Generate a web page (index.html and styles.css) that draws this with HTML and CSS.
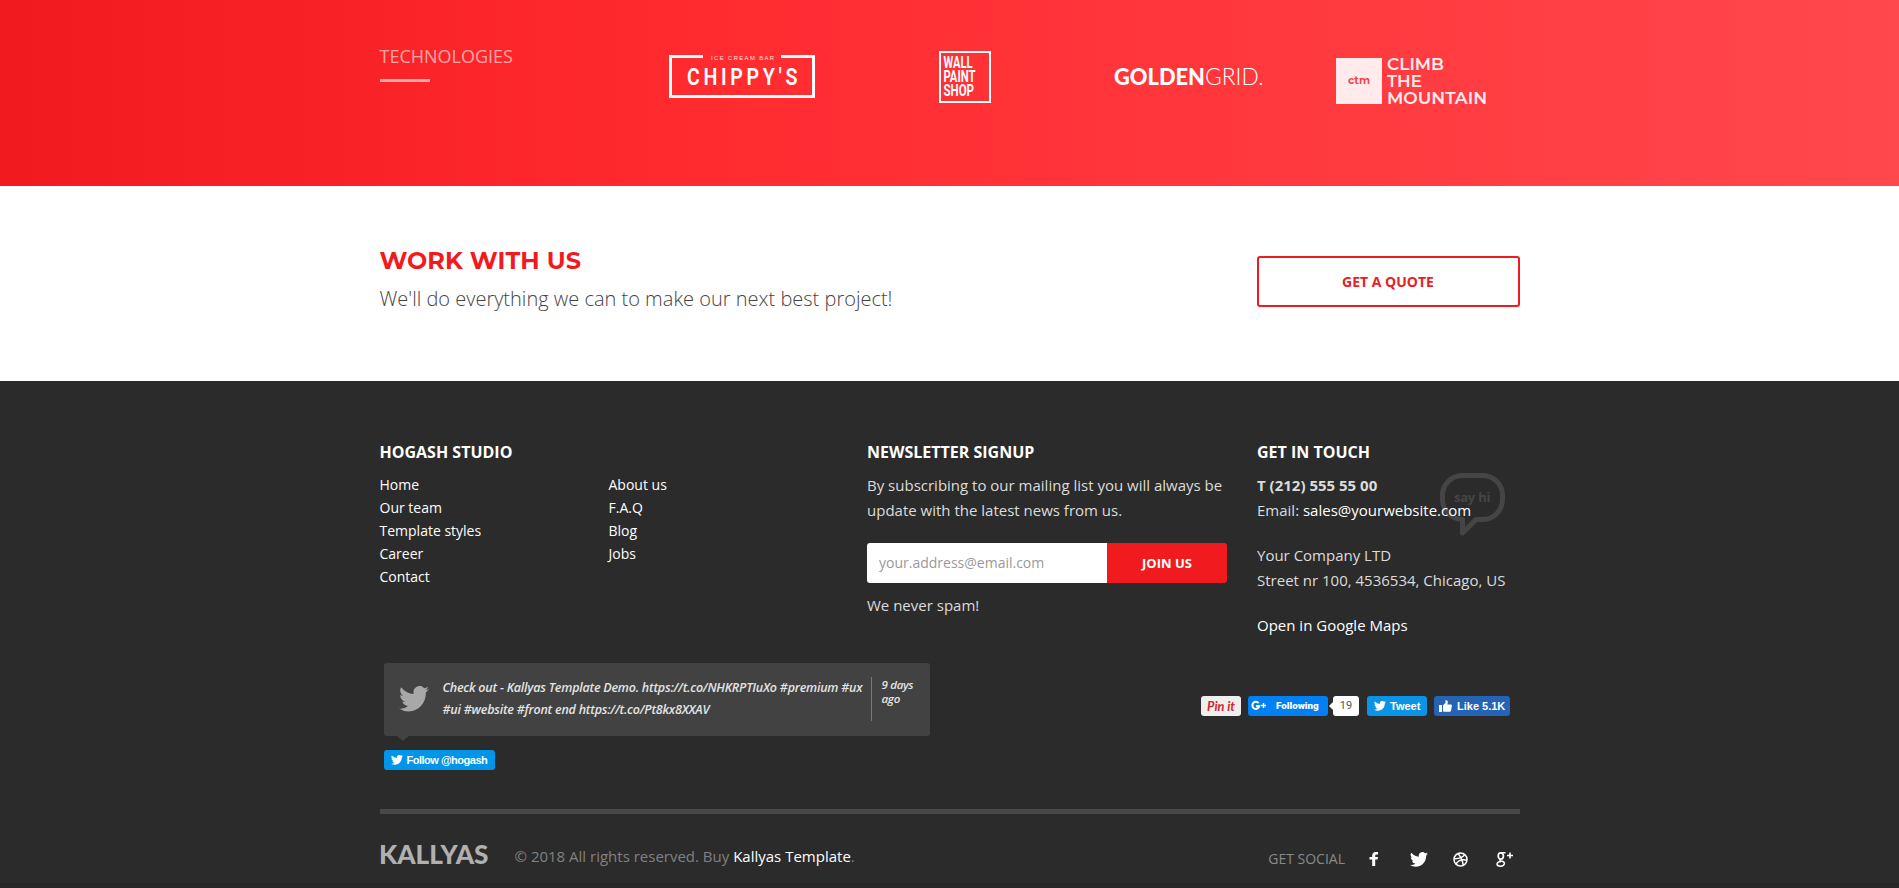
FILE: index.html
```html
<!DOCTYPE html>
<html lang="en">
<head>
<meta charset="utf-8">
<title>Kallyas</title>
<link rel="stylesheet" href="styles.css">
</head>
<body>
<svg width="0" height="0" class="defs" aria-hidden="true">
  <symbol id="bird" viewBox="0 0 24 20" preserveAspectRatio="none"><path d="M24 2.4a9.8 9.8 0 0 1-2.8.8A4.9 4.9 0 0 0 23.3.5a9.9 9.9 0 0 1-3.1 1.2 4.9 4.9 0 0 0-8.4 4.5A14 14 0 0 1 1.7 1a4.9 4.9 0 0 0 1.5 6.6 4.9 4.9 0 0 1-2.2-.6v.1c0 2.4 1.7 4.4 4 4.8a5 5 0 0 1-2.3.1 4.9 4.9 0 0 0 4.6 3.4A9.9 9.9 0 0 1 0 17.4a14 14 0 0 0 7.5 2.2c9.1 0 14-7.5 14-14v-.6A10 10 0 0 0 24 2.4z"/></symbol>
</svg>

<section class="tech">
  <div class="wrap tech-row">
    <div class="tech-title"><h3>TECHNOLOGIES</h3><span class="rule"></span></div>
    <svg class="logo chippy" width="147" height="43" viewBox="0 0 147 43">
      <path d="M34 1.5H1.5V41.5H144.500V1.500H112" fill="none" stroke="#fff" stroke-width="3"/>
      <text x="42" y="4.500" font-size="5.800" class="arial" textLength="63">ICE CREAM BAR</text>
      <text transform="translate(18 30.200) scale(.8 1)" font-size="24.500" class="roboto" textLength="138">CHIPPY'S</text>
    </svg>
    <svg class="logo wall" width="53" height="52" viewBox="0 0 53 52">
      <rect x="1" y="1" width="50" height="50" fill="none" stroke="#fff" stroke-width="2"/>
      <g font-size="16.500" class="cond">
        <text x="4.500" y="17" textLength="29" lengthAdjust="spacingAndGlyphs">WALL</text>
        <text x="4.500" y="31" textLength="32" lengthAdjust="spacingAndGlyphs">PAINT</text>
        <text x="4.500" y="44.700" textLength="30.500" lengthAdjust="spacingAndGlyphs">SHOP</text>
      </g>
    </svg>
    <svg class="logo golden" width="151" height="24" viewBox="0 0 151 24">
      <text x="0" y="19.300" font-size="22.500" class="lato-h" textLength="91" lengthAdjust="spacingAndGlyphs">GOLDEN</text>
      <text x="91" y="19.300" font-size="22.500" class="lato-l" textLength="58.500" lengthAdjust="spacingAndGlyphs">GRID.</text>
    </svg>
    <svg class="logo climb" width="152" height="50" viewBox="0 0 152 50">
      <rect x="0" y="2" width="46" height="46" fill="#ffebec"/>
      <text x="12" y="28" font-size="11" class="ctm" textLength="22" lengthAdjust="spacingAndGlyphs">ctm</text>
      <g font-size="17" class="mont" fill="#ffebec">
        <text x="51" y="14" textLength="57" lengthAdjust="spacingAndGlyphs">CLIMB</text>
        <text x="51" y="31" textLength="35" lengthAdjust="spacingAndGlyphs">THE</text>
        <text x="51" y="47.500" textLength="100" lengthAdjust="spacingAndGlyphs">MOUNTAIN</text>
      </g>
    </svg>
  </div>
</section>

<section class="cta">
  <div class="wrap cta-row">
    <div>
      <h2>WORK WITH US</h2>
      <p class="lead">We'll do everything we can to make our next best project!</p>
    </div>
    <a class="quote">GET A QUOTE</a>
  </div>
</section>

<footer class="footer">
  <div class="wrap cols">
    <div class="col-menu">
      <h4>HOGASH STUDIO</h4>
      <ul class="menu">
        <li>Home</li><li>Our team</li><li>Template styles</li><li>Career</li><li>Contact</li>
        <li>About us</li><li>F.A.Q</li><li>Blog</li><li>Jobs</li>
      </ul>
    </div>
    <div class="col-news">
      <h4 class="h-news">NEWSLETTER SIGNUP</h4>
      <p>By subscribing to our mailing list you will always be<br>update with the latest news from us.</p>
      <div class="form"><span class="field">your.address@email.com</span><span class="join">JOIN US</span></div>
      <p>We never spam!</p>
    </div>
    <div class="col-touch">
      <svg class="bubble" width="66" height="64" viewBox="0 0 66 64">
        <path d="M22 2.500H43A20 20 0 0 1 62.500 22V27A20 20 0 0 1 43 46.500H36L22.500 60V46.500A20 20 0 0 1 2.500 27V22A20 20 0 0 1 22 2.500Z" fill="none" stroke="#454545" stroke-width="5" stroke-linejoin="round"/>
        <text x="14" y="28.500" font-size="13" class="sayhi" textLength="36.500">say hi</text>
      </svg>
      <h4>GET IN TOUCH</h4>
      <p><b>T (212) 555 55 00</b><br>Email: <a>sales@yourwebsite.com</a></p>
      <p>Your Company LTD<br>Street nr 100, 4536534, Chicago, US</p>
      <p><a>Open in Google Maps</a></p>
    </div>
  </div>

  <div class="wrap feed">
    <div>
      <div class="tweet">
        <svg class="tw-icon" width="30" height="26" fill="#a8a8a8"><use href="#bird" width="30" height="26"/></svg>
        <div class="tw-text">Check out - Kallyas Template Demo. https://t.co/NHKRPTIuXo #premium #ux<br>#ui #website #front end https://t.co/Pt8kx8XXAV</div>
        <div class="tw-date">9 days<br>ago</div>
      </div>
      <div class="follow"><svg width="12" height="10" fill="#fff"><use href="#bird" width="12" height="10"/></svg><span>Follow @hogash</span></div>
    </div>
    <div class="share">
      <span class="pin"><svg width="40" height="20"><text x="6" y="14.500" class="pint" textLength="28" lengthAdjust="spacingAndGlyphs">Pin it</text></svg></span>
      <span class="gp"><svg width="16" height="12" viewBox="0 0 16 12" fill="none" stroke="#fff" stroke-width="2"><path d="M7.600 3.200A3.500 3.500 0 1 0 8.300 6H5"/><path d="M10 5.500h5M12.500 3v5" stroke-width="1.400"/></svg><span>Following</span></span>
      <span class="count">19</span>
      <span class="tw"><svg width="12" height="10" fill="#fff"><use href="#bird" width="12" height="10"/></svg><span>Tweet</span></span>
      <span class="like"><svg width="13" height="12" viewBox="0 0 13 12" fill="#fff"><path d="M0 5h3v7H0zM4 5.200L6.400 3V0.600Q8.800-.4 8.800 2.200L8.400 4.500H12q1 .2 .9 1.300l-.9 5q-.3 1-1.300 1H5L4 11.200z"/></svg><span>Like 5.1K</span></span>
    </div>
  </div>

  <div class="wrap bottom">
    <svg class="kallyas" width="110" height="26"><text x="-1" y="21" font-size="26.500" textLength="109.500" lengthAdjust="spacingAndGlyphs">KALLYAS</text></svg>
    <p class="copy">© 2018 All rights reserved. Buy <a>Kallyas Template</a>.</p>
    <div class="social">
      <span class="get">GET SOCIAL</span>
      <svg width="10" height="14" viewBox="0 0 10 14"><path d="M9 0H6.800Q3.200 0 3.200 3.600V5H.5v2.600H3.200V14H6.200V7.600H8.600L9 5H6.200V3.700Q6.200 2.500 7.300 2.500H9z" fill="#fff"/></svg>
      <svg width="18" height="15" fill="#fff"><use href="#bird" width="18" height="15"/></svg>
      <svg width="15" height="15" viewBox="0 0 15 15" fill="none" stroke="#fff" stroke-width="1.500"><circle cx="7.500" cy="7.500" r="6.500"/><path d="M5 1.500Q9 6 10.300 13M1 6.600Q8.500 7 11.600 2.600M3 12.200Q6 6.500 14 8.200"/></svg>
      <svg width="18" height="15" viewBox="0 0 18 15" fill="none" stroke="#fff"><ellipse cx="4.800" cy="4" rx="2.600" ry="3.200" stroke-width="1.700"/><path d="M5 .7H9.500M4.300 7.200Q3 8.300 5.200 9Q8.600 9.800 8.400 11.700Q8 14.200 4.600 14.200Q1 14.200 1 12Q1.200 9.800 5 9.500" stroke-width="1.500"/><path d="M11 3.500h6M14 .5v6" stroke-width="1.600"/></svg>
    </div>
  </div>
</footer>
</body>
</html>
```
FILE: styles.css
```css
* { box-sizing: border-box; }
body { margin: 0; height: 888px; overflow: hidden; font-family: "Open Sans", sans-serif; background: #2b2b2b; }
h2, h3, h4, p, ul { margin: 0; padding: 0; font-weight: 400; }
svg { display: block; flex: none; overflow: visible; }
.defs { position: absolute; }
.wrap { width: 1140px; margin: 0 auto; }

.tech { height: 186px; background: linear-gradient(90deg, #f11a1f 0%, #ff2a2e 35%, #ff484d 100%); }
.tech-row { display: flex; align-items: flex-start; padding-top: 44px; }
.tech-title { width: 289.500px; }
.tech-title h3 { font-size: 18px; line-height: 25px; color: rgba(255,255,255,.6); }
.rule { display: block; width: 50px; height: 3px; margin-top: 10px; background: rgba(255,255,255,.6); }
.logo { fill: #fff; }
.chippy { margin: 11px 123px 0 0; }
.wall { margin: 7px 122px 0 0; }
.golden { margin: 22px 71px 0 0; }
.climb { margin-top: 12px; }
.arial { font-family: "Liberation Sans", sans-serif; opacity: .85; }
.roboto { font-family: Roboto, sans-serif; font-weight: 600; }
.cond { font-family: Roboto, sans-serif; font-weight: 700; }
.lato-h { font-family: Lato, sans-serif; font-weight: 900; }
.lato-l { font-family: Lato, sans-serif; font-weight: 300; }
.mont { font-family: Montserrat, Inter, sans-serif; font-weight: 600; }
.ctm { font-family: Montserrat, Inter, sans-serif; font-weight: 700; fill: #f5454a; }

.cta { height: 195px; background: #fff; }
.cta-row { display: flex; justify-content: space-between; align-items: flex-start; padding-top: 60px; }
h2 { font: 700 24px/29px Montserrat, Inter, sans-serif; color: #f11b1f; letter-spacing: .1px; }
.lead { font-size: 20px; font-weight: 300; line-height: 30px; margin-top: 9px; color: #444; }
.quote { width: 263px; height: 51px; margin-top: 10px; border: 2px solid #f11b1f; border-radius: 3px; font-size: 14px; font-weight: 700; line-height: 47px; text-align: center; color: #e8201f; }

.footer { height: 507px; padding-top: 61px; color: #dcdcdc; border-bottom: 5px solid #272727; background: #2b2b2b; }
.footer a { color: #fff; }
h4 { font-size: 16px; font-weight: 700; line-height: 20px; margin-bottom: 11px; color: #fff; }
.cols { display: flex; height: 221px; }
.cols p { font-size: 15px; line-height: 25px; margin-bottom: 20px; white-space: nowrap; }
.col-menu { width: 487.500px; }
.col-news { width: 390px; }
.menu { list-style: none; height: 115px; display: grid; grid-template-rows: repeat(5, 23px); grid-auto-flow: column; grid-auto-columns: 229px; font-size: 14px; line-height: 23px; color: #fff; }
.form { display: flex; width: 360px; height: 40px; margin-bottom: 10px; border-radius: 3px; overflow: hidden; }
.field { width: 240px; padding-left: 12px; background: #fff; color: #999; font-size: 14px; line-height: 39px; }
.join { width: 120px; background: #f11b1f; color: #fff; font-size: 13px; font-weight: 700; line-height: 41px; text-align: center; }
.col-touch { position: relative; }
.bubble { position: absolute; left: 183px; top: 31px; }
.col-touch p { position: relative; }
.sayhi { font-weight: 700; fill: #454545; }

.feed { display: flex; justify-content: space-between; height: 146px; padding-left: 4px; }
.tweet { position: relative; display: flex; width: 546px; height: 73px; border-radius: 3px; background: #424242; color: #e4e4e4; font-style: italic; font-weight: 600; white-space: nowrap; }
.tweet::after { content: ""; position: absolute; left: 13px; top: 73px; border: 6px solid transparent; border-top: 5px solid #424242; border-bottom: 0; }
.tw-icon { margin: 23px 14px 0 15px; }
.tw-text { width: 428px; font-size: 12.500px; line-height: 22px; padding-top: 14px; letter-spacing: -.22px; }
.tw-date { height: 44px; margin-top: 14px; padding: 1px 0 0 10px; border-left: 1px solid #777; font-size: 11.500px; line-height: 14px; letter-spacing: -.3px; }
.follow { display: flex; align-items: center; width: 111px; height: 20px; margin-top: 14px; padding-left: 7px; gap: 4px; border-radius: 3px; background: #0095e8; color: #fff; font: 700 11px/20px "Liberation Sans", sans-serif; letter-spacing: -.5px; }
.share { display: flex; height: 20px; margin: 33px 9.500px 0 0; color: #fff; font: 700 11px/20px "Liberation Sans", sans-serif; }
.share > span { height: 20px; border-radius: 3px; display: flex; align-items: center; white-space: nowrap; }
.pin { width: 40px; background: #efefef; margin-right: 7px; }
.pint { font: italic 700 14px Lato, sans-serif; fill: #d8232c; }
.gp { width: 80px; background: #0080f2; margin-right: 5px; padding-left: 3px; gap: 9px; font: 900 9.800px/20px Roboto, sans-serif; }
.count { position: relative; width: 26px; background: #fff; color: #555; font: 11px/20px Roboto, sans-serif; justify-content: center; margin-right: 8px; }
.count::before { content: ""; position: absolute; left: -4px; top: 6px; border: 4px solid transparent; border-right-color: #fff; border-left: 0; }
.tw { width: 60px; background: #0b94e6; margin-right: 7px; padding-left: 7px; gap: 4px; }
.like { width: 76px; background: #2563b5; padding-left: 5px; gap: 5px; }

.bottom { display: flex; border-top: 5px solid #484848; }
.kallyas { margin-top: 29px; font-family: Lato, sans-serif; font-weight: 900; fill: #b0b0b0; }
.copy { margin: 30px 0 0 25px; font-size: 15px; line-height: 25px; color: #818181; }
.social { display: flex; align-items: center; height: 20px; margin: 35px 5.500px 0 auto; }
.get { font-size: 14px; line-height: 20px; color: #898989; margin-right: 23.500px; }
.social svg + svg { margin-left: 31px; }
.social svg:nth-of-type(3) { margin-left: 25px; }
.social svg:nth-of-type(4) { margin-left: 28.500px; }
```
